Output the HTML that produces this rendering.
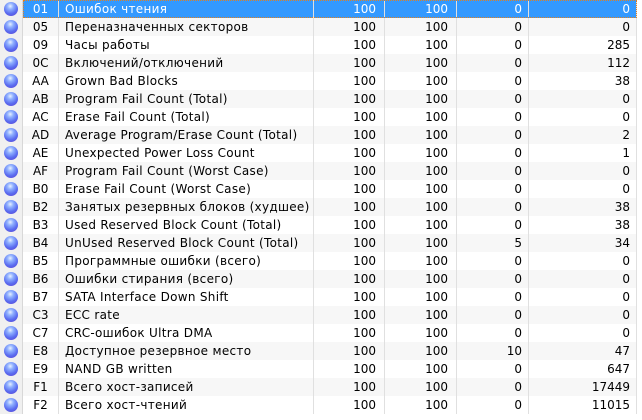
<!DOCTYPE html><html><head><style>
body{margin:0;width:642px;height:420px;background:#fff;overflow:hidden;font-family:"DejaVu Sans",sans-serif;font-size:12px;color:#000}
.r{position:absolute;left:0;width:642px;height:18px}
.ic{position:absolute;left:0;top:0;width:22px;height:18px;background:#f0f0f0;border-right:1px solid #d8d8d8}
.ic i{position:absolute;left:4px;top:2px;width:14px;height:14px;border-radius:50%;background:radial-gradient(circle at 45% 30%,#e8f0ff 0,#8fb0ff 25%,#5a6cf0 60%,#5b3fd0 100%)}
.c{position:absolute;top:0;height:18px;line-height:19px;border-right:1px solid #e0e0e0;box-sizing:border-box;white-space:nowrap;overflow:hidden}
.id{left:23px;width:36px;text-align:center}
.n{left:59px;width:255px;padding-left:6px;letter-spacing:0.3px}
.a{left:314px;width:71px;text-align:right;padding-right:8px}
.b{left:385px;width:72px;text-align:right;padding-right:8px}
.t{left:457px;width:72px;text-align:right;padding-right:6px}
.v{left:529px;width:108px;text-align:right;padding-right:6px}
.g .c{background:#f7f7f7}
.s .c{background:#3399ff;color:#fff}
.sel{position:absolute;left:23px;top:0;width:614px;height:18px;box-sizing:border-box;border:1px dotted #e08020}
</style></head><body>
<div id="t"></div>
<script>
var d=[["01","Ошибок чтения",0,0],["05","Переназначенных секторов",0,0],["09","Часы работы",0,285],["0C","Включений/отключений",0,112],["AA","Grown Bad Blocks",0,38],["AB","Program Fail Count (Total)",0,0],["AC","Erase Fail Count (Total)",0,0],["AD","Average Program/Erase Count (Total)",0,2],["AE","Unexpected Power Loss Count",0,1],["AF","Program Fail Count (Worst Case)",0,0],["B0","Erase Fail Count (Worst Case)",0,0],["B2","Занятых резервных блоков (худшее)",0,38],["B3","Used Reserved Block Count (Total)",0,38],["B4","UnUsed Reserved Block Count (Total)",5,34],["B5","Программные ошибки (всего)",0,0],["B6","Ошибки стирания (всего)",0,0],["B7","SATA Interface Down Shift",0,0],["C3","ECC rate",0,0],["C7","CRC-ошибок Ultra DMA",0,0],["E8","Доступное резервное место",10,47],["E9","NAND GB written",0,647],["F1","Всего хост-записей",0,17449],["F2","Всего хост-чтений",0,11015]];
var h="";d.forEach(function(r,i){h+='<div class="r'+(i==0?' s':(i%2?' g':''))+'" style="top:'+(i*18)+'px"><div class="ic"><i></i></div><div class="c id">'+r[0]+'</div><div class="c n">'+r[1]+'</div><div class="c a">100</div><div class="c b">100</div><div class="c t">'+r[2]+'</div><div class="c v">'+r[3]+'</div>'+(i==0?'<div class="sel"></div>':'')+'</div>'});
document.getElementById("t").innerHTML=h;
</script>
</body></html>
